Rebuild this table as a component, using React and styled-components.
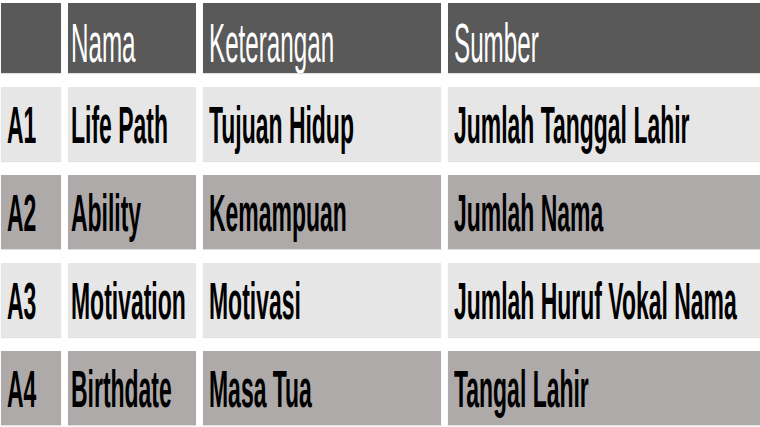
import styled, { createGlobalStyle } from 'styled-components';

const GlobalStyle = createGlobalStyle`
    html, body {
        margin: 0;
        padding: 0;
        background: #ffffff;
        overflow: hidden;
    }
`;

const Table = styled.div`
    display: grid;
    grid-template-columns: 60px 128px 238px 1fr;
    grid-template-rows: 70px repeat(4, 74px);
    column-gap: 7px;
    row-gap: 14px;
    padding: 3px 0 0 1px;
    width: 760px;
    height: 427px;
    box-sizing: border-box;
    font-family: "Liberation Sans", Arial, sans-serif;
`;

const tones = {
    head: { bg: '#595959', fg: '#ffffff' },
    light: { bg: '#e7e6e6', fg: '#000000' },
    dark: { bg: '#aeaaaa', fg: '#000000' },
};

const Cell = styled.div`
    display: flex;
    align-items: center;
    min-width: 0;
    overflow: hidden;
    background: ${(p) => tones[p.$tone].bg};
    color: ${(p) => tones[p.$tone].fg};
    padding: ${(p) => (p.$tone === 'head' ? '10px 0 0 6px' : '3px 0 0 6px')};
    box-shadow: 0 1px 1px rgba(0, 0, 0, 0.12);
`;

const Label = styled.span`
    display: inline-block;
    white-space: nowrap;
    transform-origin: left center;
    line-height: 1;
    font-size: ${(p) => (p.$head ? '55px' : '51px')};
    font-weight: ${(p) => (p.$head ? 400 : 700)};
    transform: scaleX(${(p) => (p.$head ? 0.44 : 0.45)});
    margin-left: ${(p) => (p.$tight ? '-3px' : '0')};
`;

const header = ['', 'Nama', 'Keterangan', 'Sumber'];

const rows = [
    ['A1', 'Life Path', 'Tujuan Hidup', 'Jumlah Tanggal Lahir'],
    ['A2', 'Ability', 'Kemampuan', 'Jumlah Nama'],
    ['A3', 'Motivation', 'Motivasi', 'Jumlah Huruf Vokal Nama'],
    ['A4', 'Birthdate', 'Masa Tua', 'Tangal Lahir'],
];

export default function App() {
    return (
        <>
            <GlobalStyle />
            <Table>
                {header.map((h, i) => (
                    <Cell key={'h' + i} $tone="head">
                        <Label $head $tight={i === 1}>{h}</Label>
                    </Cell>
                ))}
                {rows.map((row, r) =>
                    row.map((text, c) => (
                        <Cell key={r + '-' + c} $tone={r % 2 === 0 ? 'light' : 'dark'}>
                            <Label $tight={c === 1}>{text}</Label>
                        </Cell>
                    ))
                )}
            </Table>
        </>
    );
}
